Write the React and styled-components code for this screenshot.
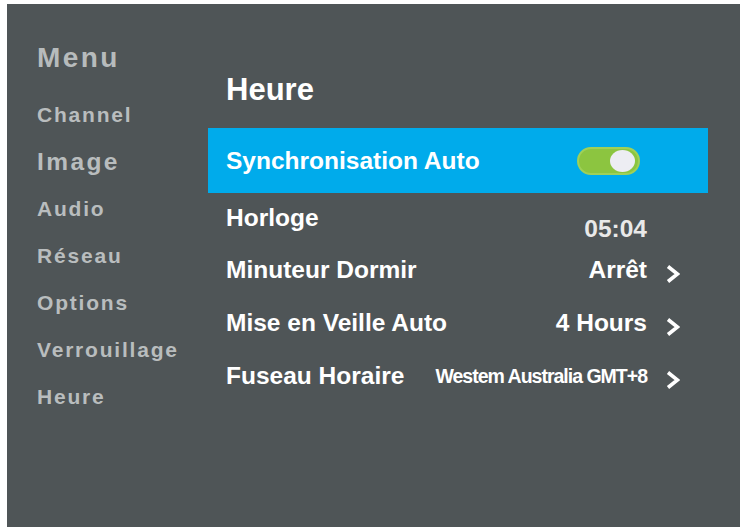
import styled, { createGlobalStyle } from "styled-components"

const Global = createGlobalStyle`
  html, body {
    margin: 0;
    padding: 0;
    background: #ffffff;
  }
  body {
    font-family: "Liberation Sans", Arial, sans-serif;
  }
`

const Screen = styled.div`
  box-sizing: border-box;
  margin: 4px 0 0 7px;
  width: 733px;
  height: 523px;
  background: #4f5557;
  display: flex;
`

// menu de gauche
const Side = styled.div`
  width: 201px;
  box-sizing: border-box;
  padding: 38px 0 0 30px;
  display: flex;
  flex-direction: column;
`

const MenuTitle = styled.div`
  font-size: 28px;
  line-height: 32px;
  font-weight: 700;
  letter-spacing: 2.4px;
  color: #b7bbbc;
  margin-bottom: 17px;
`

const SideItem = styled.div`
  font-size: ${(p) => (p.$big ? "24.5px" : "21px")};
  line-height: 47px;
  font-weight: 700;
  letter-spacing: ${(p) => (p.$big ? "2.4px" : "1.8px")};
  color: #b9bdbe;
  white-space: nowrap;
`

// partie droite
const Main = styled.div`
  width: 500px;
  padding-top: 68px;
  display: flex;
  flex-direction: column;
`

const Title = styled.div`
  font-size: 31px;
  line-height: 36px;
  font-weight: 700;
  color: #ffffff;
  padding-left: 18px;
  margin-bottom: 20px;
`

const Selected = styled.div`
  height: 65px;
  background: #00abeb;
  display: flex;
  align-items: center;
  justify-content: space-between;
  padding: 0 68px 0 18px;
  font-size: 24.5px;
  font-weight: 700;
  color: #ffffff;
`

const Toggle = styled.div`
  box-sizing: border-box;
  width: 63px;
  height: 28px;
  border-radius: 14px;
  background: #8cc540;
  border: 2px solid #9fd058;
  display: flex;
  align-items: center;
  justify-content: flex-end;
  padding-right: 3px;
`

const Knob = styled.div`
  width: 25px;
  height: 22px;
  border-radius: 50%;
  background: #ededf3;
`

const List = styled.div`
  display: flex;
  flex-direction: column;
  padding: 9.5px 28px 0 18px;
`

const Row = styled.div`
  height: 52.7px;
  display: flex;
  align-items: flex-start;
`

const Label = styled.div`
  flex: 1;
  font-size: 24.5px;
  line-height: 30px;
  font-weight: 700;
  color: #ffffff;
  white-space: nowrap;
`

const Value = styled.div`
  font-size: ${(p) => (p.$small ? "19.5px" : "24.5px")};
  letter-spacing: ${(p) => (p.$small ? "-1px" : "0")};
  line-height: 30px;
  font-weight: 700;
  color: ${(p) => (p.$dim ? "#e9e9e9" : "#ffffff")};
  margin-top: ${(p) => p.$drop || 0}px;
  white-space: nowrap;
`

const ArrowBox = styled.div`
  width: 14px;
  height: 20px;
  margin: 9px 0 0 19px;
  display: flex;
`

function Chevron() {
  return (
    <svg width="14" height="20" viewBox="0 0 14 20">
      <path d="M2 2.5 L11.5 10 L2 17.5" fill="none" stroke="#ffffff" strokeWidth="3.6" strokeLinejoin="miter" />
    </svg>
  )
}

const sideItems = [
  { t: "Channel" },
  { t: "Image", big: true },
  { t: "Audio" },
  { t: "Réseau" },
  { t: "Options" },
  { t: "Verrouillage" },
  { t: "Heure" },
]

const rows = [
  { label: "Horloge", value: "05:04", dim: true, drop: 11, arrow: false },
  { label: "Minuteur Dormir", value: "Arrêt", arrow: true },
  { label: "Mise en Veille Auto", value: "4 Hours", arrow: true },
  { label: "Fuseau Horaire", value: "Westem Australia GMT+8", small: true, arrow: true },
]

export default function App() {
  return (
    <>
      <Global />
      <Screen>
        <Side>
          <MenuTitle>Menu</MenuTitle>
          {sideItems.map((it) => (
            <SideItem key={it.t} $big={it.big}>
              {it.t}
            </SideItem>
          ))}
        </Side>
        <Main>
          <Title>Heure</Title>
          <Selected>
            <span>Synchronisation Auto</span>
            <Toggle>
              <Knob />
            </Toggle>
          </Selected>
          <List>
            {rows.map((r) => (
              <Row key={r.label}>
                <Label>{r.label}</Label>
                <Value $small={r.small} $dim={r.dim} $drop={r.drop}>
                  {r.value}
                </Value>
                <ArrowBox>{r.arrow && <Chevron />}</ArrowBox>
              </Row>
            ))}
          </List>
        </Main>
      </Screen>
    </>
  )
}
